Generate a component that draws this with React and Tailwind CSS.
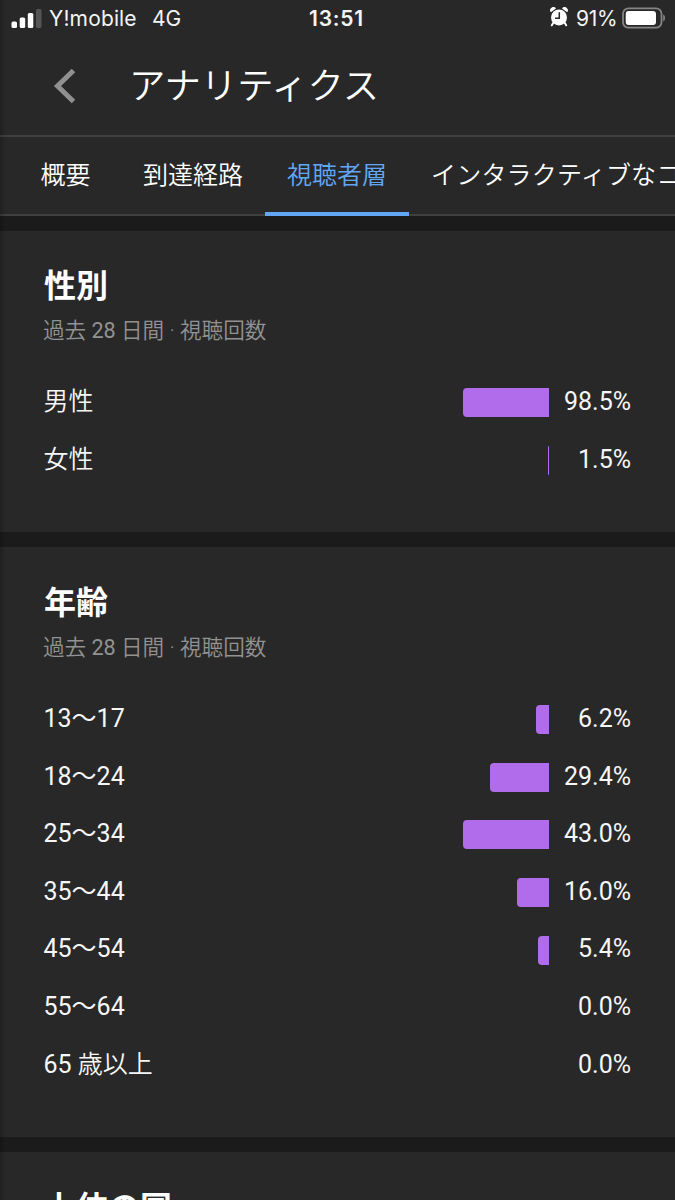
const GENDER = [
  { label: '男性', value: '98.5%', width: 86.5 },
  { label: '女性', value: '1.5%', width: 1.3 },
];

const AGES = [
  { range: '13〜17', value: '6.2%', width: 12.7 },
  { range: '18〜24', value: '29.4%', width: 59.2 },
  { range: '25〜34', value: '43.0%', width: 86.5 },
  { range: '35〜44', value: '16.0%', width: 32.3 },
  { range: '45〜54', value: '5.4%', width: 11 },
  { range: '55〜64', value: '0.0%', width: 0 },
  { range: '65', label: ' 歳以上', value: '0.0%', width: 0 },
];

const TABS = [
  { label: '概要', className: 'w-[111px]' },
  { label: '到達経路', className: 'w-[144px]' },
  { label: '視聴者層', className: 'w-[144px]', active: true },
  { label: 'インタラクティブなコ', className: 'pl-[22px] tracking-[0.2px]' },
];

function StatusBar() {
  return (
    <div className="relative flex h-[37px] items-center justify-between pl-[11px] pr-[10px] font-['Inter',sans-serif] text-[21px] font-normal text-gray-100">
      <div className="flex items-center">
        <svg width="31" height="20" viewBox="0 0 31 20" fill="#fff">
          <rect x="0.5" y="12.5" width="5.5" height="6.5" rx="1.5" />
          <rect x="8.7" y="8.5" width="5.5" height="10.5" rx="1.5" />
          <rect x="16.8" y="4" width="5.5" height="15" rx="1.5" />
          <rect x="25" y="0" width="5.5" height="19" rx="1.5" fill="#555" />
        </svg>
        <span className="ml-[7px] w-[103px] tracking-[0.15px]">Y!mobile</span>
        <span>4G</span>
      </div>
      <span className="absolute left-[309px] font-semibold tracking-[0.8px]">13:51</span>
      <div className="flex items-center">
        {/* alarm clock */}
        <svg width="18" height="20" viewBox="0 0 18 20" className="mb-[3px] mr-[8px]">
          <path d="M3.5 15.5 1.8 18.3M14.5 15.5l1.7 2.8" stroke="#fff" strokeWidth="2" strokeLinecap="round" />
          <path d="M0.8 5.2A3.2 3.2 0 0 1 6 1.4zM17.2 5.2A3.2 3.2 0 0 0 12 1.4z" fill="#fff" />
          <circle cx="9" cy="10.4" r="8" fill="#fff" />
          <path d="M9.3 5.2v6H5" fill="none" stroke="#282828" strokeWidth="1.5" />
        </svg>
        <span className="w-[46px] tracking-[-0.3px]">91%</span>
        <svg width="44" height="22" viewBox="0 0 44 22" className="-mr-[1px] mb-[2px]">
          <rect x="1" y="1.3" width="38.5" height="19.4" rx="5.5" fill="none" stroke="#858585" strokeWidth="1.8" />
          <rect x="3.7" y="4" width="30.3" height="14" rx="3" fill="#fff" />
          <path d="M41.2 7.5c2.4.8 2.4 6.2 0 7z" fill="#858585" />
        </svg>
      </div>
    </div>
  );
}

function Header() {
  return (
    <header className="flex h-[98px] items-center">
      <svg width="24" height="38" viewBox="0 0 24 38" className="ml-[53px]">
        <path d="M20.5 3.5 4.5 19l16 15.5" fill="none" stroke="#909090" strokeWidth="5" />
      </svg>
      <h1 className="ml-[52px] pt-[2px] text-[36.3px] leading-none">アナリティクス</h1>
    </header>
  );
}

function Tabs() {
  return (
    <nav className="flex h-[81px] overflow-hidden border-y-2 border-[#404040] pl-[10px] pt-px text-[25px]">
      {TABS.map((tab) => (
        <div
          key={tab.label}
          className={`flex shrink-0 items-center justify-center whitespace-nowrap ${tab.className} ${tab.active ? 'text-[#62a6f4]' : ''}`}
        >
          {tab.label}
        </div>
      ))}
    </nav>
  );
}

function Row({ range, label, value, width }) {
  return (
    <div className="flex h-[57.6px] items-center">
      <div className="-ml-[0.5px] flex-1 whitespace-pre pb-[2px]">
        {range && <span className="font-normal">{range}</span>}
        {label}
      </div>
      <div className="h-[29px] rounded-l bg-[#b06cea]" style={{ width }} />
      <div className="w-[82px] pb-[2px] text-right font-normal">{value}</div>
    </div>
  );
}

function Card({ title, rows, className }) {
  return (
    <section className={`shrink-0 bg-[#282828] px-[44px] ${className}`}>
      <h2 className="h-12 text-[32px] font-bold leading-[48px]">{title}</h2>
      <p className="-ml-px mt-[5px] text-[21.6px] leading-8 text-[#929292]">
        過去 <span className="font-normal">28</span> 日間 · 視聴回数
      </p>
      <div className="mt-[27.5px] text-[25px] text-[#f6f6f6]">
        {rows.map((row) => (
          <Row key={row.range || row.label} {...row} />
        ))}
      </div>
    </section>
  );
}

export default function App() {
  return (
    <div lang="ja" className="relative flex h-[1200px] w-[675px] flex-col overflow-hidden bg-[#1b1b1b] font-['Roboto','Noto_Sans_CJK_JP',sans-serif] font-[350] text-white">
      <div className="bg-[#282828]">
        <StatusBar />
        <Header />
        <div className="relative">
          <Tabs />
          {/* active tab indicator, overlaps the bottom border */}
          <div className="absolute bottom-0 left-[265px] h-1 w-[144px] bg-[#62a6f4]" />
        </div>
      </div>
      <div className="mt-[15px] flex flex-col gap-[15px]">
        <Card title="性別" rows={GENDER} className="h-[301px] pt-[30.5px]" />
        <Card title="年齢" rows={AGES} className="h-[590px] pt-[31.5px]" />
        <Card title="上位の国" rows={[]} className="h-[300px] pt-[32px]" />
      </div>
      <div className="absolute inset-y-0 left-0 w-[6px] bg-linear-to-r from-black/20 to-transparent" />
    </div>
  );
}
